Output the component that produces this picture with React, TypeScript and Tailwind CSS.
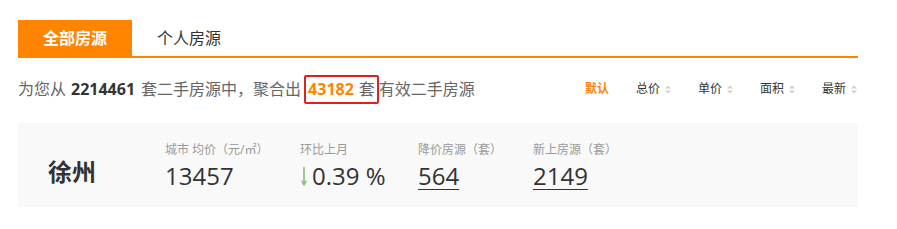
const font = { fontFamily: '"Open Sans", "Noto Sans CJK SC", sans-serif' };

const sorts = ['总价', '单价', '面积', '最新'];

const SortArrow = () => (
  <svg width="6" height="9" viewBox="0 0 6 9" className="ml-[5px]">
    <path d="M0 3.5 L3 0.5 L6 3.5 Z" fill="#cfcfcf" />
    <path d="M0 5.5 L3 8.5 L6 5.5 Z" fill="#cfcfcf" />
  </svg>
);

const DownArrow = () => (
  <svg width="8" height="20" viewBox="0 0 8 20" className="mr-[4px]">
    <path d="M4 1 V18" stroke="#7cb26a" strokeWidth="1.4" />
    <path d="M1.5 14.5 L4 19 L6.5 14.5" stroke="#7cb26a" strokeWidth="1.2" fill="none" />
  </svg>
);

const Stat = ({
  label,
  value,
  link,
  down,
}: {
  label: string;
  value: string;
  link?: boolean;
  down?: boolean;
}) => (
  <div className="flex flex-col">
    <span className="text-[12px] leading-[14px] text-[#999]">{label}</span>
    <span
      className={`mt-[4px] flex items-center text-[24px] leading-[30px] text-[#333] ${link ? 'underline decoration-1 underline-offset-[4px]' : ''}`}
    >
      {down && <DownArrow />}
      {value}
    </span>
  </div>
);

export default function App() {
  return (
    <div className="h-[229px] w-[897px] bg-white" style={font}>
      <div className="ml-[18px] w-[840px] pt-[20px]">
        <div className="flex h-[38px] border-b-2 border-[#ff8400]">
          <div className="flex w-[114px] items-center justify-center bg-[#ff8400] text-[16px] font-bold text-white">
            全部房源
          </div>
          <div className="flex items-center pl-[25px] text-[16px] text-[#333]">个人房源</div>
        </div>

        <div className="mt-[16px] flex h-[30px] items-center justify-between">
          <div className="flex items-center text-[16px] text-[#666]">
            为您从
            <b className="mr-[6px] ml-[5px] text-[#333]">2214461</b>
            套二手房源中，聚合出
            <span className="ml-[3px] flex h-[29px] items-center rounded-[2px] border-2 border-[#e02020] pr-[2px] pl-[2px]">
              <b className="mr-[5px] text-[#ff8400]">43182</b>套
            </span>
            有效二手房源
          </div>
          <div className="flex items-center text-[12px] text-[#333]">
            <span className="w-[51px] font-bold text-[#ff8400]">默认</span>
            {sorts.map((s) => (
              <span key={s} className="flex w-[62px] items-center last:w-[36px]">
                {s}
                <SortArrow />
              </span>
            ))}
          </div>
        </div>

        <div className="mt-[19px] flex h-[84px] items-center bg-[#f9f9f9]">
          <div className="w-[147px] pt-[14px] pl-[30px] text-[24px] leading-[30px] font-bold text-[#333]">徐州</div>
          <div className="flex pt-[4px]">
            <div className="w-[135px]">
              <Stat label="城市 均价（元/㎡）" value="13457" />
            </div>
            <div className="w-[118px]">
              <Stat label="环比上月" value="0.39 %" down />
            </div>
            <div className="w-[115px]">
              <Stat label="降价房源（套）" value="564" link />
            </div>
            <div>
              <Stat label="新上房源（套）" value="2149" link />
            </div>
          </div>
        </div>
      </div>
    </div>
  );
}
